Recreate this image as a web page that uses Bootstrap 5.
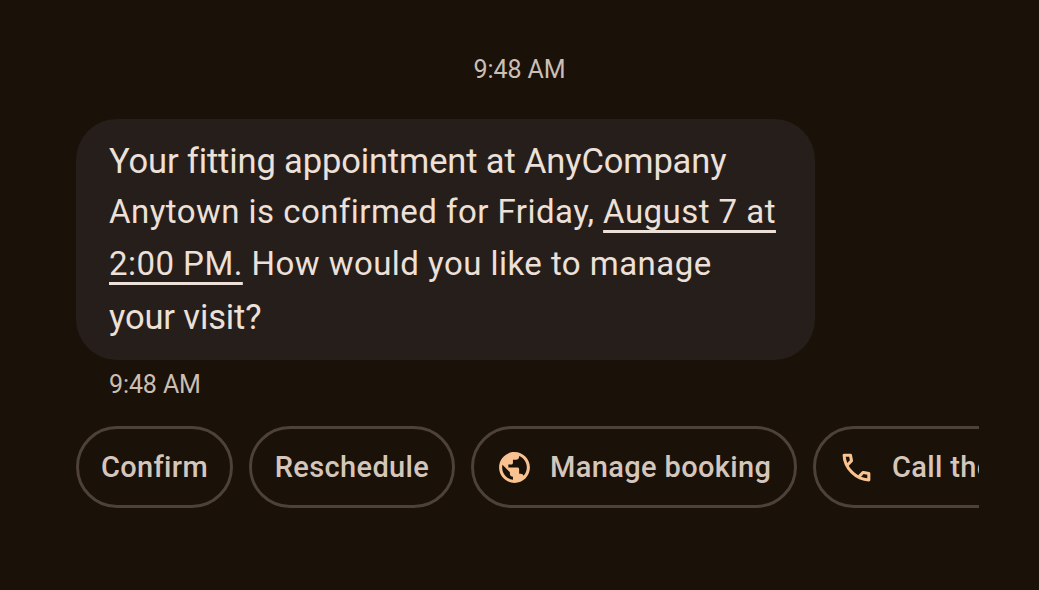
<!DOCTYPE html>
<html lang="en">
<head>
<meta charset="utf-8">
<meta name="viewport" content="width=device-width, initial-scale=1">
<title>Messages</title>
<link href="https://cdn.jsdelivr.net/npm/bootstrap@5.3.0/dist/css/bootstrap.min.css" rel="stylesheet">
<style>
  body { background: #1a1108; font-family: Roboto, "Liberation Sans", sans-serif; color: #ede0d9; height: 590px; }
  .chat { padding: 52px 60px 0 76px; }
  .stamp { color: #cbbfb5; font-size: 25px; line-height: 36px; letter-spacing: -.1px; }
  .stamp-top { margin-left: -16px; }
  .stamp-sent { margin: 7px 0 0 33px; }
  .bubble { width: 739px; height: 241px; margin-top: 31px; padding: 17px 0 0 33px; background: #261e1a; border-radius: 41px; }
  .line { font-size: 34.5px; line-height: 50px; letter-spacing: -.14px; white-space: nowrap; }
  .line-wide { font-size: 33px; line-height: 52px; letter-spacing: .46px; }
  .line-tall { line-height: 54px; }
  .when { text-decoration: underline; text-decoration-thickness: 3px; text-underline-offset: 7px; text-decoration-skip-ink: none; }
  .chips { margin-top: 23px; gap: 16px; }
  .chip { flex: none; height: 82px; border: 3px solid #4d4139; padding: 0; color: #d5c6bb; font-size: 29px; font-weight: 500; line-height: 1; letter-spacing: .36px; white-space: nowrap; }
  .chip-confirm { width: 157px; }
  .chip-reschedule { width: 206px; }
  .chip-link { width: 326px; padding-left: 22px; gap: 17px; }
  .chip svg { width: 37px; height: 37px; fill: #f8c291; flex: none; }
</style>
</head>
<body class="overflow-hidden">
<main class="chat">
  <div class="stamp stamp-top text-center">9:48 AM</div>
  <div class="bubble">
    <div class="line">Your fitting appointment at AnyCompany</div>
    <div class="line line-wide">Anytown is confirmed for Friday, <span class="when">August 7 at</span></div>
    <div class="line line-wide"><span class="when">2:00 PM.</span> How would you like to manage</div>
    <div class="line line-tall">your visit?</div>
  </div>
  <div class="stamp stamp-sent">9:48 AM</div>
  <div class="chips d-flex overflow-hidden">
    <button class="chip chip-confirm btn rounded-pill">Confirm</button>
    <button class="chip chip-reschedule btn rounded-pill">Reschedule</button>
    <button class="chip chip-link btn rounded-pill d-flex align-items-center">
      <svg viewBox="0 0 24 24" aria-hidden="true"><path d="M12 2C6.48 2 2 6.48 2 12s4.48 10 10 10 10-4.48 10-10S17.52 2 12 2zm-1 17.93c-3.95-.49-7-3.85-7-7.93 0-.62.08-1.21.21-1.79L9 15v1c0 1.1.9 2 2 2v1.93zm6.9-2.54c-.26-.81-1-1.39-1.9-1.39h-1v-3c0-.55-.45-1-1-1H8v-2h2c.55 0 1-.45 1-1V7h2c1.1 0 2-.9 2-2v-.41c2.93 1.19 5 4.06 5 7.41 0 2.08-.8 3.97-2.1 5.39z"/></svg>
      <span>Manage booking</span>
    </button>
    <button class="chip chip-link btn rounded-pill d-flex align-items-center">
      <svg viewBox="0 0 24 24" aria-hidden="true"><path d="M19.95 21q-3.125 0-6.175-1.362t-5.55-3.863-3.862-5.55T3 4.05q0-.45.3-.75t.75-.3H8.1q.35 0 .625.238t.325.562l.65 3.5q.05.4-.025.675T9.4 8.45L6.975 10.9q.5.925 1.187 1.787t1.513 1.663q.775.775 1.625 1.438T13.1 17l2.35-2.35q.225-.225.588-.337t.712-.063l3.45.7q.35.1.575.363T21 15.9v4.05q0 .45-.3.75t-.75.3M6.025 9l1.65-1.65L7.25 5H5.025q.125 1.025.35 2.025T6.025 9m8.95 8.95q.975.425 1.988.675T19 18.95v-2.2l-2.35-.475z"/></svg>
      <span>Call the</span>
    </button>
  </div>
</main>
<script src="https://cdn.jsdelivr.net/npm/bootstrap@5.3.0/dist/js/bootstrap.bundle.min.js"></script>
</body>
</html>
